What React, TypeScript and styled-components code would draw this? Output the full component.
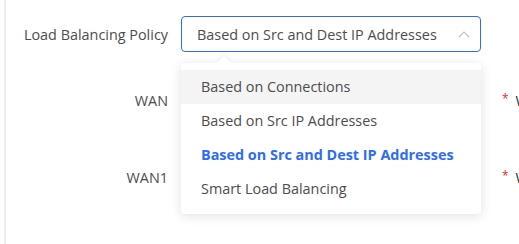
import React from "react";
import styled, { createGlobalStyle } from "styled-components";

const Global = createGlobalStyle`
  html, body { margin: 0; padding: 0; background: #fff; overflow: hidden; }
  body { font-family: "Open Sans", "Noto Sans", Arial, sans-serif; }
`;

const Page = styled.div`
  margin-left: 4px;
  border-left: 2px solid #ededed;
  height: 244px;
  box-sizing: border-box;
  padding-top: 16px;
  display: flex;
  flex-direction: column;
`;

const Row = styled.div<{ $h: number; $mt?: number }>`
  display: grid;
  grid-template-columns: 162px 300px auto;
  column-gap: 13px;
  align-items: center;
  height: ${(p) => p.$h}px;
  margin-top: ${(p) => p.$mt ?? 0}px;
`;

const Label = styled.div`
  text-align: right;
  font-size: 14.4px;
  color: #4d4d4d;
  white-space: nowrap;
`;

const SelectWrap = styled.div`
  position: relative;
  height: 100%;
`;

const Select = styled.div`
  box-sizing: border-box;
  height: 36px;
  border: 1px solid #2f6cf6;
  border-radius: 4px;
  display: flex;
  align-items: center;
  justify-content: space-between;
  padding: 0 10px 0 15px;
  font-size: 14.4px;
  color: #4d4d4d;
`;

const Menu = styled.div`
  position: absolute;
  left: 0;
  top: 47px;
  width: 300px;
  box-sizing: border-box;
  background: #fff;
  border-radius: 4px;
  padding: 7px 0 8px;
  box-shadow: 0 2px 12px rgba(0, 0, 0, 0.12);
  z-index: 5;
`;

const Caret = styled.div`
  position: absolute;
  left: 38px;
  top: -5px;
  width: 10px;
  height: 10px;
  background: #fff;
  transform: rotate(45deg);
  box-shadow: -2px -2px 4px rgba(0, 0, 0, 0.04);
`;

const Item = styled.div<{ $active?: boolean; $hover?: boolean }>`
  position: relative;
  height: 34px;
  line-height: 34px;
  padding-left: 20px;
  font-size: 14.4px;
  color: ${(p) => (p.$active ? "#2f6cf6" : "#4d4d4d")};
  font-weight: ${(p) => (p.$active ? 700 : 400)};
  background: ${(p) => (p.$hover ? "#f4f4f4" : "transparent")};
  white-space: nowrap;
`;

const Extra = styled.div`
  display: flex;
  align-items: center;
  margin-left: 8px;
  font-size: 14.4px;
  color: #333;
  white-space: nowrap;
`;

const Star = styled.span`
  color: #f5222d;
  margin-right: 7px;
  font-size: 12px;
  position: relative;
  top: -2px;
`;

const Chevron = () => (
  <svg width="12" height="7" viewBox="0 0 12 7" fill="none">
    <path d="M1 6 L6 1 L11 6" stroke="#c0c4cc" strokeWidth="1.2" />
  </svg>
);

export default function App() {
  return (
    <>
      <Global />
      <Page>
        <Row $h={36}>
          <Label>Load Balancing Policy</Label>
          <SelectWrap>
            <Select>
              <span>Based on Src and Dest IP Addresses</span>
              <Chevron />
            </Select>
            <Menu>
              <Caret />
              <Item $hover>Based on Connections</Item>
              <Item>Based on Src IP Addresses</Item>
              <Item $active>Based on Src and Dest IP Addresses</Item>
              <Item>Smart Load Balancing</Item>
            </Menu>
          </SelectWrap>
          <div />
        </Row>
        <Row $h={36} $mt={30}>
          <Label>WAN</Label>
          <div />
          <Extra>
            <Star>*</Star>Weight
          </Extra>
        </Row>
        <Row $h={36} $mt={41}>
          <Label>WAN1</Label>
          <div />
          <Extra>
            <Star>*</Star>Weight
          </Extra>
        </Row>
      </Page>
    </>
  );
}
